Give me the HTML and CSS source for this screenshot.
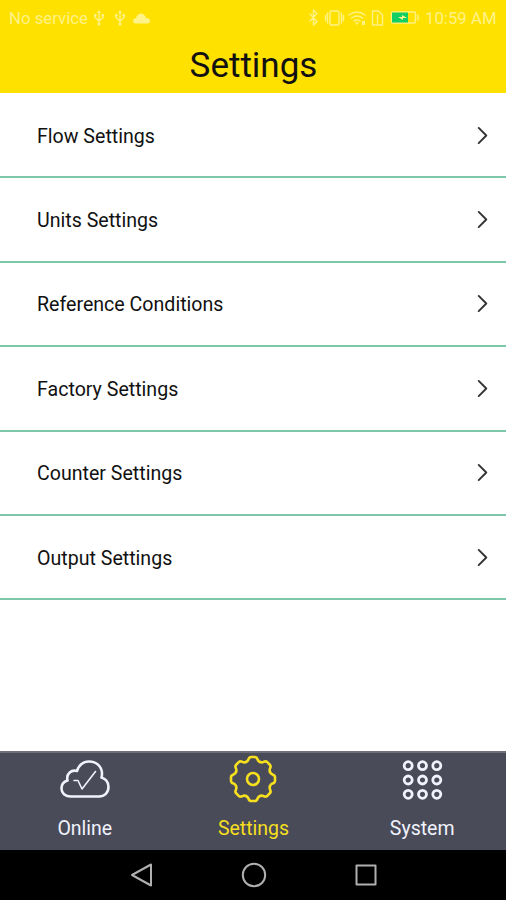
FILE: index.html
```html
<!DOCTYPE html>
<html lang="en">
<head>
<meta charset="utf-8">
<title>Settings</title>
<link rel="stylesheet" href="styles.css">
</head>
<body>
<header class="header">
  <div class="status">
    <span class="carrier">No service</span>
    <svg class="status-left" width="62" height="20" viewBox="0 0 62 20">
      <g id="usb"><path d="M9 4v12M5 7v2.500L9 13l4-3.500V7"/><path class="solid" d="M9 2l2 3H7zM4 6h2.500v2.500H4zM11.500 6H14v2.500h-2.500z"/><circle class="solid" cx="9" cy="16" r="1.600"/></g>
      <use href="#usb" x="21"/>
      <path class="solid" d="M46 15.500q-3-.2-3-2.500 0-2.500 3-3 1.500-4.500 5-4.500t5 4.500q4 .2 4 3 0 2.500-3 2.500z"/>
    </svg>
    <svg class="status-right" width="113" height="20" viewBox="0 0 113 20">
      <path d="M3 6l7 7.500L6.500 17V2L10 5.500 3 13"/>
      <rect x="23" y="3" width="9" height="14" rx="1.500"/><path d="M20.500 5v10M34.500 5v10M18.500 7.500v5M36.500 7.500v5"/>
      <path d="M42 7q8-6 16 0M44.500 10q5.500-4 11 0M47 13q3-2 6 0"/><path class="solid" d="M48 14.500h4L50 17zM55 13h3v4h-3z"/>
      <path d="M65.500 3h6l4 4v10h-10zM70.500 7v5M70.500 13.500v1.500"/>
      <rect x="84.500" y="4" width="24" height="11" rx="1.500"/><path class="charge" d="M85 4.500h16v10H85z"/><path class="solid" d="M91 9h4V7l5 3h-4v2z"/><path d="M111 7v5"/>
    </svg>
    <span class="clock">10:59 AM</span>
  </div>
  <h1 class="title">Settings</h1>
</header>
<main class="list">
  <a class="row"><span>Flow Settings</span><svg class="chevron" viewBox="0 0 12 20"><path d="M2 2l8 8-8 8"/></svg></a>
  <a class="row"><span>Units Settings</span><svg class="chevron" viewBox="0 0 12 20"><path d="M2 2l8 8-8 8"/></svg></a>
  <a class="row"><span>Reference Conditions</span><svg class="chevron" viewBox="0 0 12 20"><path d="M2 2l8 8-8 8"/></svg></a>
  <a class="row"><span>Factory Settings</span><svg class="chevron" viewBox="0 0 12 20"><path d="M2 2l8 8-8 8"/></svg></a>
  <a class="row"><span>Counter Settings</span><svg class="chevron" viewBox="0 0 12 20"><path d="M2 2l8 8-8 8"/></svg></a>
  <a class="row"><span>Output Settings</span><svg class="chevron" viewBox="0 0 12 20"><path d="M2 2l8 8-8 8"/></svg></a>
</main>
<nav class="tabs">
  <a class="tab">
    <svg class="tab-icon" viewBox="-1 0 52 48"><path d="M12 41.500C6 41.500 2.500 38 2.500 33.500C2.500 29 5 26.500 8.500 25.500C7 19 12 14.500 18 16C20 10 24.500 6.500 30 6.500C38 6.500 43 12 43 18.500C43 20 43 21 42.500 22.500C47 24 49.500 27.500 49.500 32C49.500 37.500 45.500 41.500 40 41.500Z"/><path class="check" d="M15 25.500H19L23 34L36.500 16.500"/></svg>
    <span>Online</span>
  </a>
  <a class="tab active">
    <svg class="tab-icon" viewBox="-26 -24 52 48">
      <path id="tooth" d="M-7-17C-5.500-17.600-5-18.300-4.600-19.500Q-3.800-22-1.800-22H1.800Q3.800-22 4.600-19.500C5-18.300 5.500-17.600 7-17"/>
      <use href="#tooth" transform="rotate(45)"/><use href="#tooth" transform="rotate(90)"/><use href="#tooth" transform="rotate(135)"/><use href="#tooth" transform="rotate(180)"/><use href="#tooth" transform="rotate(225)"/><use href="#tooth" transform="rotate(270)"/><use href="#tooth" transform="rotate(315)"/>
      <circle r="6"/>
    </svg>
    <span>Settings</span>
  </a>
  <a class="tab">
    <svg class="tab-icon dots" viewBox="-26.500 -25 52 48"><g id="dots"><circle cx="-14.300" r="4"/><circle r="4"/><circle cx="14.300" r="4"/></g><use href="#dots" y="-14.300"/><use href="#dots" y="14.300"/></svg>
    <span>System</span>
  </a>
</nav>
<footer class="navbar">
  <svg viewBox="0 0 28 28"><path d="M4 14L23 3.500V24.500Z"/></svg>
  <svg viewBox="0 0 28 28"><circle cx="14" cy="14" r="11.200"/></svg>
  <svg viewBox="0 0 28 28"><rect x="4.500" y="4.500" width="19" height="19"/></svg>
</footer>
</body>
</html>
```
FILE: styles.css
```css
* { box-sizing: border-box; }
body {
  margin: 0;
  height: 900px;
  display: flex;
  flex-direction: column;
  overflow: hidden;
  background: #fff;
  color: #111;
  font-family: Roboto, "Liberation Sans", sans-serif;
}
svg {
  display: block;
  fill: none;
  stroke: currentColor;
  stroke-linecap: round;
  stroke-linejoin: round;
}
.header { height: 93px; background: #ffe100; }
.status {
  height: 36px;
  padding: 0 10px 0 9px;
  display: flex;
  align-items: center;
  color: #fff287;
  font-size: 16.8px;
  line-height: 20px;
  white-space: nowrap;
}
.status svg { stroke-width: 1.4; flex: none; }
.status .solid { fill: currentColor; stroke: none; }
.status .charge { fill: #12cf63; stroke: none; }
.carrier { width: 81px; }
.status-right { margin-left: auto; }
.clock { width: 71px; margin-left: 5px; }
.title {
  margin: 8px 0 0;
  padding-left: 1px;
  text-align: center;
  font-size: 35px;
  font-weight: 400;
  line-height: 44px;
}
.list { flex: 1; padding-top: 1px; }
.row {
  height: 84.4px;
  padding: 2px 17px 0 37px;
  display: flex;
  align-items: center;
  justify-content: space-between;
  border-bottom: 2px solid #7cc7aa;
  font-size: 19.6px;
}
.chevron { width: 13px; height: 19px; margin-bottom: 2px; stroke-width: 2; stroke: #333; }
.tabs {
  height: 99px;
  display: flex;
  background: #494b59;
  border-top: 2px solid #6e6f77;
  color: #f1f2fc;
}
.tab {
  flex: 1;
  display: flex;
  flex-direction: column;
  align-items: center;
  padding-top: 2px;
  font-size: 19.5px;
  line-height: 26px;
}
.tab span { padding-left: 1px; }
.tab.active { color: #f6df1e; }
.tab-icon { width: 52px; height: 48px; margin-bottom: 13px; stroke-width: 2.6; }
.check { stroke-width: 1.6; }
.dots { stroke-width: 2.8; }
.navbar {
  height: 50px;
  padding: 0 126px 0 128px;
  display: flex;
  align-items: center;
  justify-content: space-between;
  background: #000;
  color: #b0b0b0;
}
.navbar svg { width: 28px; height: 28px; stroke-width: 2; }
```
